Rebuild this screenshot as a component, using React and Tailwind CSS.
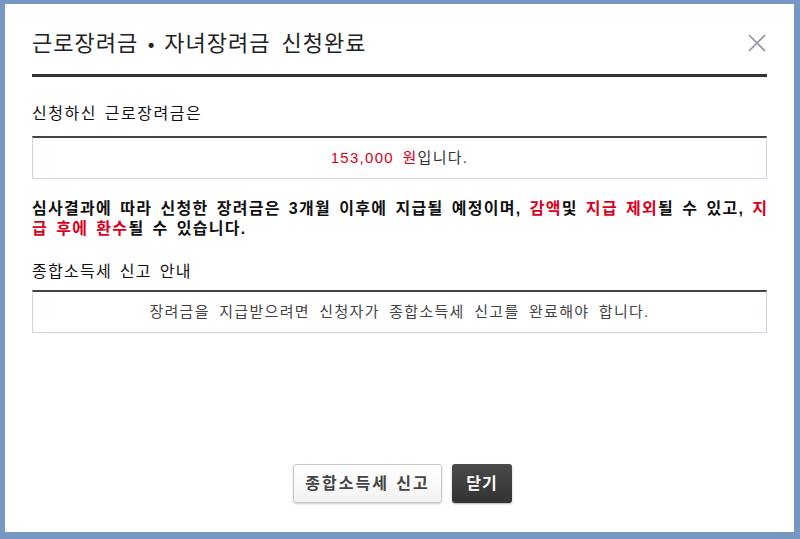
import React from "react";

const FONT = { fontFamily: '"Liberation Sans", "Noto Sans CJK KR", sans-serif' };

function CloseIcon() {
  return (
    <svg width="18" height="18" viewBox="0 0 18 18" fill="none">
      <path d="M1 1L17 17M17 1L1 17" stroke="#8c94a8" strokeWidth="1.6" />
    </svg>
  );
}

export default function App() {
  return (
    <div className="w-[800px] h-[539px] bg-[#7597c1] pt-[4px] pl-[5px] overflow-hidden" style={FONT}>
      <div className="w-[789px] h-[528px] bg-white flex flex-col px-[27px]">
        <div className="flex items-center justify-between pt-[26px] pb-[15px] border-b-[3px] border-[#333333]">
          <h1 className="text-[22px] leading-[28px] text-[#222222] tracking-[1px] [word-spacing:4px] whitespace-nowrap">
            근로장려금<span className="inline-block w-[26px] text-center text-[18px] font-bold tracking-normal">•</span>자녀장려금 신청완료
          </h1>
          <button className="mr-[1px] mt-[-4px]"><CloseIcon /></button>
        </div>

        <div className="mt-[25px] text-[16px] leading-[24px] text-[#111111] tracking-[1.5px] [word-spacing:2px]">신청하신 근로장려금은</div>
        <div className="mt-[10px] h-[43px] border-t-2 border-t-[#444444] border-x border-b border-x-[#c9d5e2] border-b-[#c9d5e2] flex items-center justify-center text-[15px] text-[#333333] tracking-[1.3px] [word-spacing:3px]">
          <span className="text-[#d7001d]">153,000 원</span>입니다.
        </div>

        <div className="mt-[20px] text-[16px] leading-[20px] font-bold text-[#111111] tracking-[1.3px] [word-spacing:2.4px]">
          <div className="whitespace-nowrap">
            심사결과에 따라 신청한 장려금은 3개월 이후에 지급될 예정이며, <span className="text-[#d7001d]">감액</span>및 <span className="text-[#d7001d]">지급 제외</span>될 수 있고, <span className="text-[#d7001d]">지</span>
          </div>
          <div className="whitespace-nowrap">
            <span className="text-[#d7001d]">급 후에 환수</span>될 수 있습니다.
          </div>
        </div>

        <div className="mt-[21px] text-[16px] leading-[24px] text-[#111111] tracking-[1.3px] [word-spacing:2px]">종합소득세 신고 안내</div>
        <div className="mt-[6px] h-[43px] border-t-2 border-t-[#444444] border-x border-b border-x-[#c9d5e2] border-b-[#c9d5e2] flex items-center justify-center text-[15px] text-[#444444] tracking-[1.3px] [word-spacing:4px] whitespace-nowrap">
          장려금을 지급받으려면 신청자가 종합소득세 신고를 완료해야 합니다.
        </div>

        <div className="mt-auto pb-[29px] flex justify-center gap-[10px] pl-[6px]">
          <button className="w-[149px] h-[39px] rounded-[3px] border border-[#c8c8c8] bg-gradient-to-b from-white to-[#f3f3f3] shadow-[0_1px_2px_rgba(0,0,0,0.2)] text-[16px] font-bold text-[#444444] tracking-[2px] [word-spacing:1px]">
            종합소득세 신고
          </button>
          <button className="w-[60px] h-[39px] rounded-[3px] bg-gradient-to-b from-[#4a4a4a] to-[#333333] shadow-[0_1px_2px_rgba(0,0,0,0.3)] text-[16px] font-bold text-white tracking-[1px]">
            닫기
          </button>
        </div>
      </div>
    </div>
  );
}
